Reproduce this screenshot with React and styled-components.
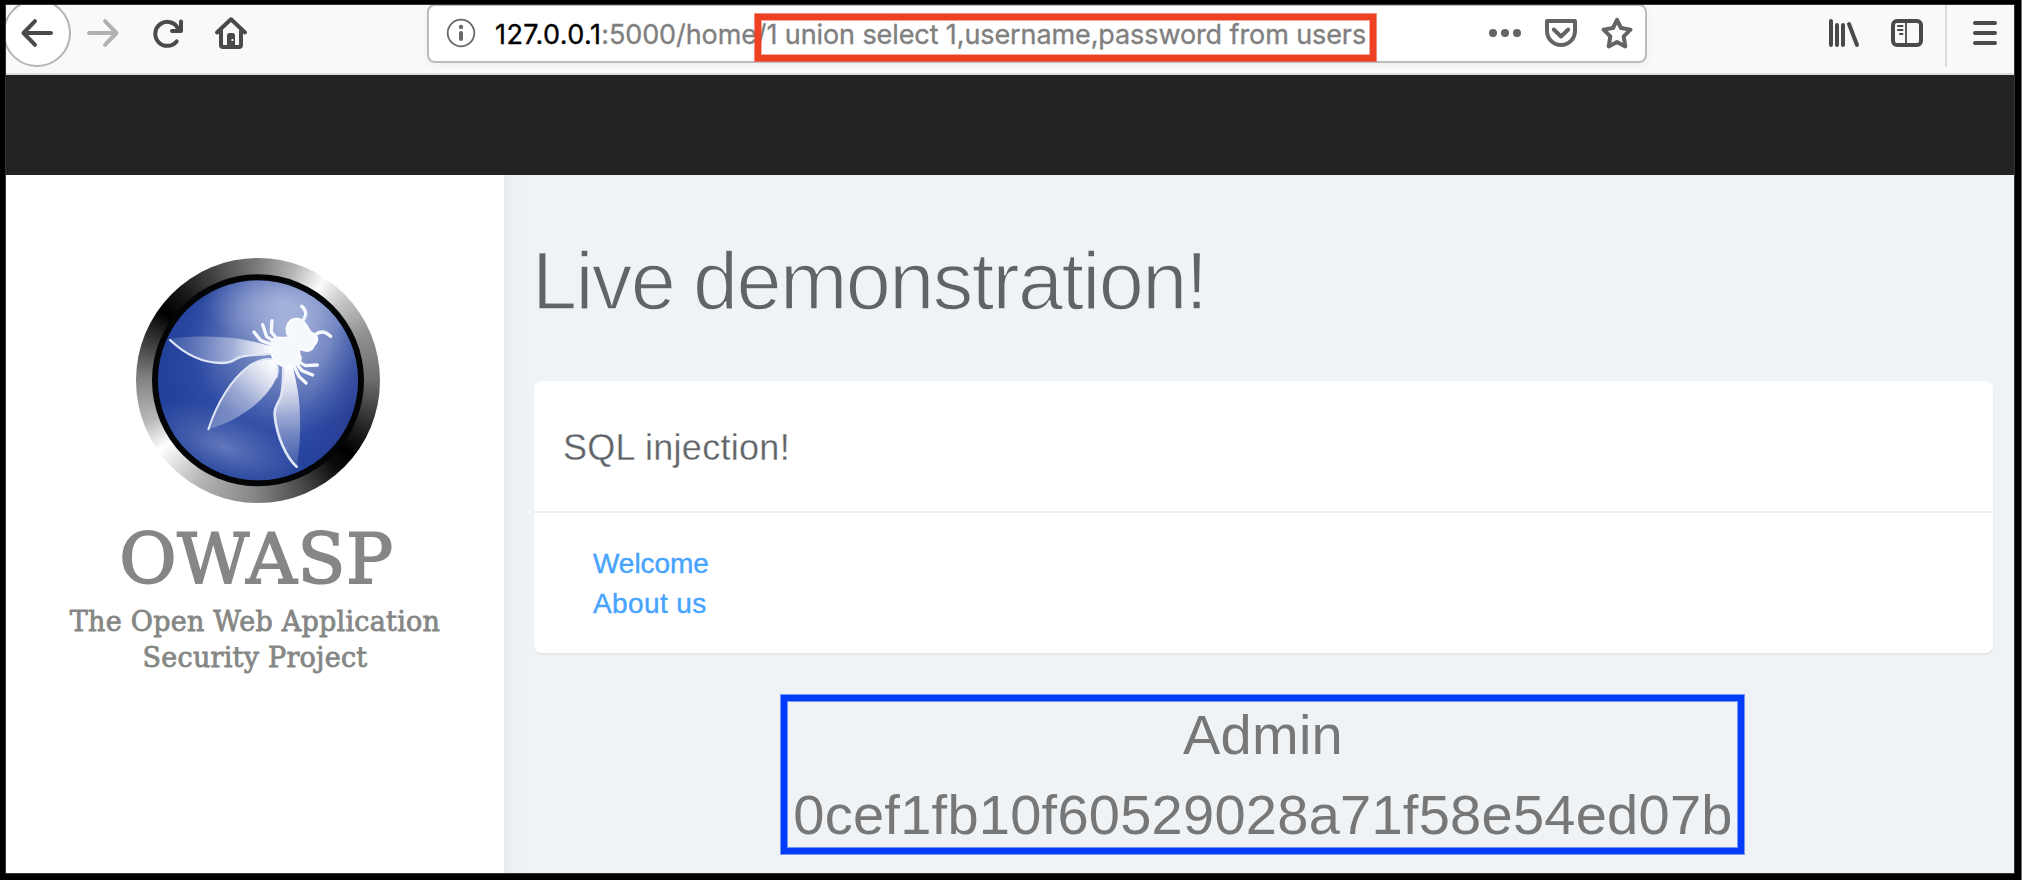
import React from "react";
import styled, { createGlobalStyle } from "styled-components";

const GlobalStyle = createGlobalStyle`
  * { box-sizing: border-box; }
  html, body { margin: 0; padding: 0; }
  body { background: #000; font-family: "Liberation Sans", Arial, sans-serif; }
`;

const Frame = styled.div`
  width: 2022px;
  height: 880px;
  padding: 5px 7px 7px 6px;
  background: #000;
  border-right: 1px solid #777;
  overflow: hidden;
`;

const Window = styled.div`
  display: flex;
  flex-direction: column;
  width: 2008px;
  height: 868px;
  background: #fff;
  overflow: hidden;
  box-shadow: 0 0 0 1px #333;
`;

const Toolbar = styled.div`
  display: flex;
  align-items: flex-start;
  flex: none;
  height: 70px;
  padding-top: 12px;
  background: #f9f9fa;
  border-bottom: 2px solid #dedede;
  overflow: hidden;
`;

const BackButton = styled.div`
  display: flex;
  align-items: center;
  justify-content: center;
  flex: none;
  width: 68px;
  height: 68px;
  margin: -18px 0 0 -3px;
  border: 2px solid #b3b3b3;
  border-radius: 50%;
  background: #fff;
`;

const Icon = styled.svg.attrs({ viewBox: "0 0 32 32", fill: "none" })`
  display: block;
  flex: none;
  width: 32px;
  height: 32px;
  margin-left: ${(p) => p.$gap || 0}px;
  color: ${(p) => p.$color || "#4a4a4a"};
  stroke: currentColor;
  stroke-width: 4;
  stroke-linecap: round;
  stroke-linejoin: round;
  overflow: visible;
`;

const UrlBar = styled.div`
  position: relative;
  display: flex;
  align-items: flex-start;
  flex: none;
  width: 1220px;
  height: 59px;
  margin: -13px 0 0 180px;
  padding: 11px 12px 0 16px;
  background: #fff;
  border: 2px solid #bcbcbc;
  border-radius: 8px;
  box-shadow: 0 2px 6px rgba(0, 0, 0, 0.06);
`;

const Address = styled.div`
  flex: 1;
  margin: 1px 0 0 18px;
  font-family: Inter, "Liberation Sans", sans-serif;
  font-size: 27px;
  line-height: 34px;
  letter-spacing: -0.1px;
  white-space: pre;
  color: #808080;
  -webkit-text-stroke: 0.35px currentColor;
`;

const Host = styled.span`
  color: #000;
  letter-spacing: 0.4px;
`;

const QueryMark = styled.div`
  position: absolute;
  left: 326px;
  top: 8px;
  width: 621px;
  height: 47px;
  border: 6px solid #ee4023;
  box-shadow: 0 0 0 1px rgba(238, 64, 35, 0.6), inset 0 0 0 1px rgba(238, 64, 35, 0.45);
`;

const Separator = styled.div`
  flex: none;
  width: 2px;
  height: 62px;
  margin: -12px 0 0 22px;
  background: #dcdcdc;
`;

const NavBand = styled.div`
  flex: none;
  height: 100px;
  background: #222;
`;

const Body = styled.div`
  display: flex;
  flex: 1;
  min-height: 0;
`;

const Sidebar = styled.aside`
  display: flex;
  flex-direction: column;
  align-items: center;
  flex: none;
  width: 498px;
  padding: 83px 0 0 6px;
  background: #fff;
`;

const Badge = styled.div`
  flex: none;
  width: 244px;
  height: 245px;
  border-radius: 50%;
  background: conic-gradient(
    #7c7c7c 0deg, #b5b5b5 18deg, #fbfbfb 33deg, #c8c8c8 46deg, #929292 66deg,
    #6c6c6c 90deg, #2a2a2a 112deg, #000 128deg, #0a0a0a 138deg, #4c4c4c 158deg,
    #868686 182deg, #b4b4b4 210deg, #fff 235deg, #b8b8b8 250deg, #858585 270deg,
    #3a3a3a 290deg, #000 306deg, #141414 318deg, #4a4a4a 340deg, #7c7c7c 360deg
  );
`;

const BadgeArt = styled.svg`
  display: block;
  width: 100%;
  height: 100%;
`;

const Brand = styled.div`
  margin: 14px 0 0 -3px;
  font-family: "DejaVu Serif", serif;
  font-size: 70px;
  line-height: 84px;
  letter-spacing: 0.6px;
  color: #858785;
  -webkit-text-stroke: 1.8px currentColor;
`;

const Tagline = styled.div`
  margin-top: 3px;
  margin-left: -6px;
  font-family: "DejaVu Serif", serif;
  font-size: 27px;
  line-height: 36px;
  letter-spacing: 0.25px;
  text-align: center;
  white-space: pre;
  color: #858785;
  -webkit-text-stroke: 0.8px currentColor;
`;

const Main = styled.main`
  flex: 1;
  min-width: 0;
  padding: 62px 21px 0 30px;
  background: linear-gradient(90deg, #e8ecef 0, #ecf0f3 9px, #eff3f6 24px);
`;

const Title = styled.h1`
  margin: 0 0 56px -2px;
  font-size: 81px;
  line-height: 88px;
  font-weight: 400;
  letter-spacing: -1.6px;
  word-spacing: -2px;
  color: #606468;
  -webkit-text-stroke: 1.5px #eff3f6;
`;

const Card = styled.section`
  height: 272px;
  background: #fff;
  border-radius: 8px;
  box-shadow: 0 2px 2px rgba(0, 0, 0, 0.05);
`;

const CardHeader = styled.h2`
  height: 132px;
  margin: 0;
  padding: 3px 0 0 29px;
  border-bottom: 2px solid #eee;
  font-size: 36px;
  line-height: 127px;
  font-weight: 400;
  letter-spacing: 0.3px;
  color: #606468;
  -webkit-text-stroke: 0.3px #fff;
`;

const LinkList = styled.ul`
  margin: 0;
  padding: 31px 0 0 59px;
  list-style: none;
`;

const LinkItem = styled.li`
  font-size: 28px;
  line-height: 40px;
  letter-spacing: ${(p) => p.$spacing}px;
  color: #46a4ff;
  -webkit-text-stroke: 0.4px currentColor;
`;

const Result = styled.div`
  width: 963px;
  height: 159px;
  margin: 42px 0 0 247px;
  border: 6px solid #003cfa;
  box-shadow: 0 0 0 1px rgba(0, 60, 250, 0.5), inset 0 0 0 1px rgba(0, 60, 250, 0.5);
  color: #777;
  text-align: center;
`;

const ResultLine = styled.div`
  margin-top: ${(p) => p.$shift || 0}px;
  padding-left: 1px;
  font-size: 56px;
  line-height: 80px;
  letter-spacing: 0.26px;
  white-space: nowrap;
`;

const Wasp = () => (
  <BadgeArt viewBox="48 55 732 733">
    <defs>
      <radialGradient id="globe" gradientUnits="userSpaceOnUse" cx="510" cy="280" r="430">
        <stop offset="0" stopColor="#a3b1db" />
        <stop offset="0.35" stopColor="#6b7fbd" />
        <stop offset="0.7" stopColor="#2f4ca5" />
        <stop offset="1" stopColor="#21409a" />
      </radialGradient>
      <radialGradient id="shine" gradientUnits="userSpaceOnUse" cx="0" cy="0" r="1" gradientTransform="translate(490 190) scale(240 120)">
        <stop offset="0" stopColor="#c9d3ee" stopOpacity="0.5" />
        <stop offset="1" stopColor="#c9d3ee" stopOpacity="0" />
      </radialGradient>
      <radialGradient id="glow" gradientUnits="userSpaceOnUse" cx="0" cy="0" r="1" gradientTransform="translate(310 620) rotate(20) scale(260 110)">
        <stop offset="0" stopColor="#8393cb" stopOpacity="0.65" />
        <stop offset="1" stopColor="#6d82c2" stopOpacity="0" />
      </radialGradient>
      <linearGradient id="edge" x1="0" y1="0.3" x2="1" y2="0.7">
        <stop offset="0" stopColor="#21409a" stopOpacity="0.7" />
        <stop offset="0.3" stopColor="#21409a" stopOpacity="0" />
        <stop offset="0.75" stopColor="#21409a" stopOpacity="0" />
        <stop offset="1" stopColor="#2b3990" stopOpacity="0.8" />
      </linearGradient>
      <linearGradient id="wingLeft" gradientUnits="userSpaceOnUse" x1="150" y1="300" x2="460" y2="325">
        <stop offset="0" stopColor="#fff" stopOpacity="0.12" />
        <stop offset="0.6" stopColor="#fff" stopOpacity="0.4" />
        <stop offset="1" stopColor="#fff" stopOpacity="1" />
      </linearGradient>
      <linearGradient id="wingMid" gradientUnits="userSpaceOnUse" x1="265" y1="568" x2="465" y2="365">
        <stop offset="0" stopColor="#fff" stopOpacity="0.2" />
        <stop offset="0.5" stopColor="#fff" stopOpacity="0.45" />
        <stop offset="1" stopColor="#fff" stopOpacity="1" />
      </linearGradient>
      <linearGradient id="wingRight" gradientUnits="userSpaceOnUse" x1="530" y1="680" x2="500" y2="380">
        <stop offset="0" stopColor="#fff" stopOpacity="0.1" />
        <stop offset="0.5" stopColor="#fff" stopOpacity="0.45" />
        <stop offset="1" stopColor="#fff" stopOpacity="1" />
      </linearGradient>
    </defs>
    <circle cx="414" cy="421" r="318" fill="#020405" />
    <circle cx="414" cy="421" r="300" fill="url(#globe)" />
    <circle cx="414" cy="421" r="300" fill="url(#edge)" />
    <circle cx="414" cy="421" r="300" fill="url(#glow)" />
    <circle cx="414" cy="421" r="299" fill="url(#shine)" />
    <path d="M148 298 C190 287 300 287 372 299 C405 305 432 314 458 320 L458 340 C430 346 395 341 365 350 C340 357 345 368 305 369 C245 369 190 340 148 298Z" fill="url(#wingLeft)" />
    <path d="M150 300 C190 338 245 369 305 369 C345 368 338 357 365 350 C395 342 430 346 458 340" fill="none" stroke="#dfe5f5" strokeWidth="7" strokeLinecap="round" />
    <path d="M265 568 C290 490 335 415 390 376 C415 360 440 355 460 358 C480 375 478 400 466 420 C435 485 350 545 265 568Z" fill="url(#wingMid)" />
    <path d="M470 412 C475 390 475 370 462 358 C440 354 415 360 390 376 C335 415 290 490 265 568" fill="none" stroke="#dfe5f5" strokeWidth="6" strokeLinecap="round" strokeLinejoin="round" />
    <path d="M490 378 L518 376 C528 425 540 470 540 530 C542 585 538 635 530 680 C495 645 470 580 464 525 C465 495 482 490 484 465 C489 430 487 400 490 378Z" fill="url(#wingRight)" />
    <path d="M490 380 C490 420 490 440 484 465 C480 488 462 495 464 525 C470 590 500 655 530 680" fill="none" stroke="#dfe5f5" strokeWidth="8" strokeLinecap="round" />
    <path d="M506 290 C494 272 498 256 511 242 C522 234 536 236 545 240 C559 248 560 260 571 274 C581 283 594 284 592 300 C590 314 579 315 578 326 C566 337 550 334 540 326 C537 334 536 341 543 352 C541 363 544 374 526 376 C508 384 486 382 472 368 C459 357 451 347 455 332 C447 315 455 298 468 292 C482 292 496 296 506 290Z" fill="#f5f8fd" stroke="#fff" strokeWidth="5" strokeLinejoin="round" />
    <g fill="none" stroke="#f4f7fd" strokeWidth="10" strokeLinecap="round" strokeLinejoin="round">
      <path d="M547 243 C562 224 560 212 545 199" />
      <path d="M584 285 C602 270 617 274 632 289" />
      <path d="M470 296 L454 276 L456 242" />
      <path d="M462 304 L440 290 L428 254" />
      <path d="M456 314 L422 301 L402 276" />
      <path d="M534 364 L556 377 L592 375" />
      <path d="M529 371 L546 392 L578 405" />
      <path d="M521 376 L537 409 L558 429" />
    </g>
  </BadgeArt>
);

export default function App() {
  return (
    <>
      <GlobalStyle />
      <Frame>
        <Window>
          <Toolbar>
            <BackButton>
              <Icon><path d="M30 16H2.500M14 4.200L2.500 16L14 27.800" /></Icon>
            </BackButton>
            <Icon $gap={16} $color="#b1b1b1"><path d="M2 16H29.500M18 4.200L29.500 16L18 27.800" /></Icon>
            <Icon $gap={32}>
              <path d="M25.600 24.400A12 12 0 1 1 27 11.500M30 4.500V14H21" />
            </Icon>
            <Icon $gap={32}>
              <path d="M2 15.500L16 2.300L30 15.500M6 14V28Q6 30 8 30H24Q26 30 26 28V14" />
              <path d="M12 30V18.500Q12 16 14.500 16H17.500Q20 16 20 18.500V30Z" fill="currentColor" stroke="none" />
              <rect x="16.500" y="22" width="1.800" height="2" fill="#f9f9fa" stroke="none" />
            </Icon>

            <UrlBar>
              <Icon $color="#696969">
                <circle cx="16" cy="16" r="13.300" strokeWidth="1.800" />
                <circle cx="16" cy="10" r="2.200" fill="currentColor" stroke="none" />
                <path d="M16 16V22" />
              </Icon>
              <Address><Host>127.0.0.1</Host>:5000/home/1 union select 1,username,password from users</Address>
              <Icon $color="#646464">
                <g fill="currentColor" stroke="none">
                  <circle cx="4" cy="16" r="4" />
                  <circle cx="16" cy="16" r="4" />
                  <circle cx="28" cy="16" r="4" />
                </g>
              </Icon>
              <Icon $gap={24} $color="#646464">
                <path d="M2 4H30V14A14 14 0 0 1 2 14ZM8.800 12.500L16 19.500L23.200 12.500" />
              </Icon>
              <Icon $gap={24} $color="#646464">
                <path d="M16 2.800L20 11L29.500 12.600L22.700 19.400L24.300 29.400L16 25L7.700 29.400L9.300 19.400L2.500 12.600L12 11Z" />
              </Icon>
              <QueryMark />
            </UrlBar>

            <Icon $gap={181}>
              <path d="M3 4V28M9 8V28M15 8V28M21 7L29 28" />
            </Icon>
            <Icon $gap={31}>
              <rect x="2" y="4" width="28" height="24" rx="4" />
              <path d="M15 4V28" strokeWidth="1.800" />
              <path d="M7 9H11.500M7 13H11.500M9 17H11.500" strokeWidth="2" />
            </Icon>
            <Separator />
            <Icon $gap={22}>
              <path d="M6 6H26M6 16H26M6 26H26" />
            </Icon>
          </Toolbar>

          <NavBand />

          <Body>
            <Sidebar>
              <Badge><Wasp /></Badge>
              <Brand>OWASP</Brand>
              <Tagline>{"The Open Web Application\nSecurity Project"}</Tagline>
            </Sidebar>
            <Main>
              <Title>Live demonstration!</Title>
              <Card>
                <CardHeader>SQL injection!</CardHeader>
                <LinkList>
                  <LinkItem $spacing={-0.05}>Welcome</LinkItem>
                  <LinkItem $spacing={0.4}>About us</LinkItem>
                </LinkList>
              </Card>
              <Result>
                <ResultLine $shift={-6}>Admin</ResultLine>
                <ResultLine>0cef1fb10f60529028a71f58e54ed07b</ResultLine>
              </Result>
            </Main>
          </Body>
        </Window>
      </Frame>
    </>
  );
}
